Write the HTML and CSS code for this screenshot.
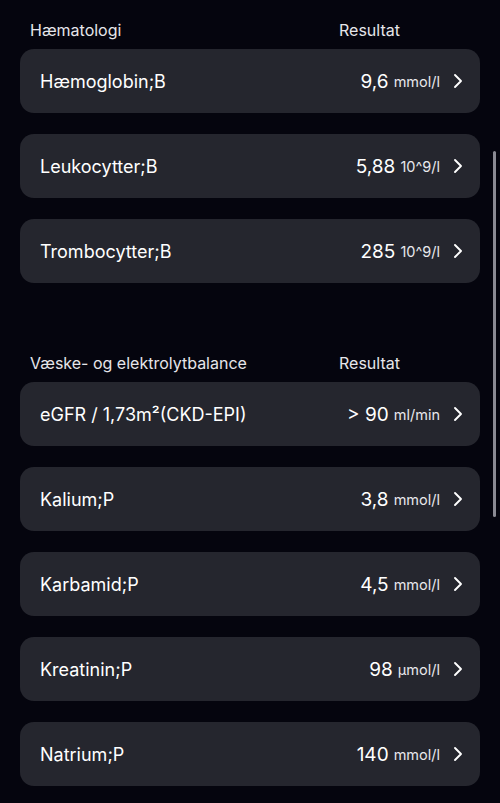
FILE: index.html
```html
<!DOCTYPE html>
<html lang="da">
<head>
    <meta charset="UTF-8">
    <meta name="viewport" content="width=device-width, initial-scale=1.0">
    <title>Prøvesvar</title>
    <link rel="stylesheet" href="styles.css">
</head>
<body>
    <div class="results">
        <section class="group">
            <div class="group-header">
                <span class="group-title">Hæmatologi</span>
                <span class="group-col">Resultat</span>
            </div>
            <a class="row" href="#">
                <span class="name">Hæmoglobin;B</span>
                <span class="value">9,6</span><span class="unit">mmol/l</span>
                <svg class="chevron" viewBox="0 0 10 16"><path d="M2 2l6 6-6 6"/></svg>
            </a>
            <a class="row" href="#">
                <span class="name">Leukocytter;B</span>
                <span class="value">5,88</span><span class="unit">10^9/l</span>
                <svg class="chevron" viewBox="0 0 10 16"><path d="M2 2l6 6-6 6"/></svg>
            </a>
            <a class="row" href="#">
                <span class="name">Trombocytter;B</span>
                <span class="value">285</span><span class="unit">10^9/l</span>
                <svg class="chevron" viewBox="0 0 10 16"><path d="M2 2l6 6-6 6"/></svg>
            </a>
        </section>

        <section class="group">
            <div class="group-header">
                <span class="group-title">Væske- og elektrolytbalance</span>
                <span class="group-col">Resultat</span>
            </div>
            <a class="row" href="#">
                <span class="name">eGFR / 1,73m²(CKD-EPI)</span>
                <span class="value">&gt; 90</span><span class="unit">ml/min</span>
                <svg class="chevron" viewBox="0 0 10 16"><path d="M2 2l6 6-6 6"/></svg>
            </a>
            <a class="row" href="#">
                <span class="name">Kalium;P</span>
                <span class="value">3,8</span><span class="unit">mmol/l</span>
                <svg class="chevron" viewBox="0 0 10 16"><path d="M2 2l6 6-6 6"/></svg>
            </a>
            <a class="row" href="#">
                <span class="name">Karbamid;P</span>
                <span class="value">4,5</span><span class="unit">mmol/l</span>
                <svg class="chevron" viewBox="0 0 10 16"><path d="M2 2l6 6-6 6"/></svg>
            </a>
            <a class="row" href="#">
                <span class="name">Kreatinin;P</span>
                <span class="value">98</span><span class="unit">µmol/l</span>
                <svg class="chevron" viewBox="0 0 10 16"><path d="M2 2l6 6-6 6"/></svg>
            </a>
            <a class="row" href="#">
                <span class="name">Natrium;P</span>
                <span class="value">140</span><span class="unit">mmol/l</span>
                <svg class="chevron" viewBox="0 0 10 16"><path d="M2 2l6 6-6 6"/></svg>
            </a>
        </section>
    </div>
    <div class="scrollbar"></div>
</body>
</html>
```

FILE: styles.css
```css
body {
    margin: 0;
    background-color: #05050e;
    color: #ffffff;
    font-family: Inter, "Noto Sans", sans-serif;
    overflow: hidden;
}
.results {
    padding: 11px 20px 0;
}
.group {
    display: flex;
    flex-direction: column;
    gap: 21px;
    margin-bottom: 61px;
}
.group-header {
    display: flex;
    align-items: center;
    height: 38px;
    margin-bottom: -21px;
    padding-left: 10px;
    font-size: 16px;
    color: #e6e6ea;
}
.group-title {
    flex: 1;
}
.group-col {
    width: 141px;
}
.row {
    display: flex;
    align-items: center;
    height: 64px;
    padding: 0 17px 0 20px;
    background-color: #25262e;
    border-radius: 14px;
    color: #ffffff;
    text-decoration: none;
}
.name {
    flex: 1;
    font-size: 18px;
}
.value {
    font-size: 19px;
}
.unit {
    margin-left: 5px;
    font-size: 14.5px;
    color: #e8e8ec;
}
.chevron {
    width: 10px;
    height: 16px;
    margin-left: 13px;
    fill: none;
    stroke: #ffffff;
    stroke-width: 1.9;
    stroke-linecap: round;
    stroke-linejoin: round;
}
.scrollbar {
    position: absolute;
    top: 151px;
    left: 493px;
    width: 3px;
    height: 366px;
    border-radius: 2px;
    background-color: #8a8a93;
}
```
